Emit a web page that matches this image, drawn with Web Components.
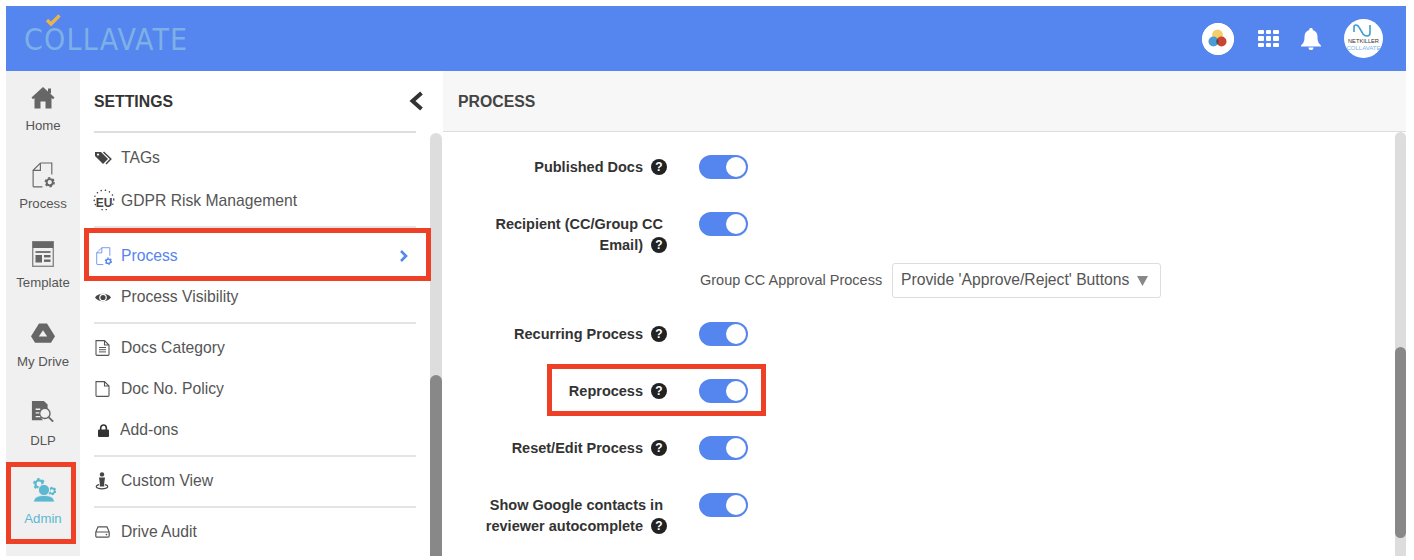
<!DOCTYPE html>
<html>
<head>
<meta charset="utf-8">
<title>Collavate Settings</title>
<style>
  html, body { margin: 0; padding: 0; height: 560px; overflow: hidden; background: #fff; }
  body { font-family: "Liberation Sans", Arial, sans-serif; }
</style>
</head>
<body>
<app-shell>
  <top-bar slot="top"></top-bar>

  <rail-item slot="rail" icon="home">Home</rail-item>
  <rail-item slot="rail" icon="process">Process</rail-item>
  <rail-item slot="rail" icon="template">Template</rail-item>
  <rail-item slot="rail" icon="drive">My Drive</rail-item>
  <rail-item slot="rail" icon="dlp">DLP</rail-item>
  <rail-item slot="rail" icon="admin" active>Admin</rail-item>

  <settings-panel slot="panel">
    <nav-group style="padding-top:3px;padding-bottom:5px">
      <nav-item icon="tags" tall>TAGs</nav-item>
      <nav-item icon="eu">GDPR Risk Management</nav-item>
    </nav-group>
    <nav-group style="padding-top:7.5px">
      <nav-item icon="process" active>Process</nav-item>
      <nav-item icon="eye">Process Visibility</nav-item>
    </nav-group>
    <nav-group>
      <nav-item icon="doclines">Docs Category</nav-item>
      <nav-item icon="doc">Doc No. Policy</nav-item>
      <nav-item icon="lock" tight>Add-ons</nav-item>
    </nav-group>
    <nav-group>
      <nav-item icon="person">Custom View</nav-item>
    </nav-group>
    <nav-group>
      <nav-item icon="hdd">Drive Audit</nav-item>
    </nav-group>
  </settings-panel>

  <process-panel slot="main">
    <process-row>Published Docs</process-row>
    <process-row sub><cc-select slot="sub"></cc-select><span style="padding-right:4px">Recipient (CC/Group CC</span><br>Email)</process-row>
    <process-row>Recurring Process</process-row>
    <process-row>Reprocess</process-row>
    <process-row>Reset/Edit Process</process-row>
    <process-row><span style="padding-right:4px">Show Google contacts in</span><br>reviewer autocomplete</process-row>
  </process-panel>

  <red-box slot="marks" style="left:6px;top:462px;width:70px;height:82px"></red-box>
  <red-box slot="marks" style="left:84px;top:228px;width:347px;height:53px"></red-box>
  <red-box slot="marks" style="left:547px;top:364px;width:219px;height:52px"></red-box>
</app-shell>

<script>
const gear = (x, y, r, c) => `
  <circle cx="${x}" cy="${y}" r="${r}" fill="none" stroke="${c}" stroke-width="${r * 0.62}"/>
  <circle cx="${x}" cy="${y}" r="${r * 1.42}" fill="none" stroke="${c}" stroke-width="${r * 0.5}" stroke-dasharray="${r * 0.72} ${r * 0.77}"/>`;

const docGear = c => `
  <path d="M9 1 H20 V12" fill="none" stroke="${c}" stroke-width="1.1"/>
  <path d="M9 1 L2 8 V23 a1 1 0 0 0 1 1 H11 M9 1 V8 H2" fill="none" stroke="${c}" stroke-width="1.1"/>
  ${gear(18, 19.5, 3, c)}`;

const ICONS = {
  home: `<svg style="margin-top:3px" width="24" height="24" viewBox="0 0 24 24"><path fill="#666" d="M12 1 L23.5 11.5 L22 13.2 L20.5 12 V22.5 H14.5 V15.5 H9.5 V22.5 H3.5 V12 L2 13.2 L.5 11.5 Z"/><rect x="17" y="2.5" width="3" height="5" fill="#666"/></svg>`,
  process: `<svg width="25" height="27" viewBox="0 0 24 26">${docGear('#666')}</svg>`,
  processBlue: `<svg width="18" height="19" viewBox="0 0 24 26">${docGear('#5585ee')}</svg>`,
  template: `<svg width="22" height="26" viewBox="0 0 22 26"><rect x=".7" y=".7" width="20.6" height="24.6" fill="none" stroke="#888" stroke-width="1.4"/><rect x=".7" y=".7" width="20.6" height="6.3" fill="#666"/><rect x="3.5" y="10" width="15" height="2" fill="#777"/><rect x="3.5" y="14" width="6.5" height="7.5" fill="#666"/><rect x="12" y="14" width="6.5" height="2.4" fill="#666"/><rect x="12" y="18.5" width="6.5" height="2.4" fill="#666"/></svg>`,
  drive: `<svg width="24" height="22" viewBox="0 0 24 24" preserveAspectRatio="none"><path fill="#666" d="M8 1.5 H16 L24 15.5 L20 22.5 H4 L0 15.5 Z"/><path fill="#f0f0f0" d="M12 9 L16.2 15.8 H7.8 Z"/></svg>`,
  dlp: `<svg width="24" height="24" viewBox="0 0 24 26"><path fill="#666" d="M0 1 H13 L17 5 V10 A7 7 0 0 0 12 22 H0 Z"/><circle cx="14" cy="14.5" r="5.6" fill="#f0f0f0" stroke="#666" stroke-width="1.5"/><path d="M18 18.5 L23 23.5" stroke="#666" stroke-width="2"/><path d="M4 10h5M4 14h4M4 18h5" stroke="#f0f0f0" stroke-width="1.4"/></svg>`,
  admin: `<svg width="25" height="26" viewBox="0 0 25 26">${gear(8, 7, 3.6, '#5bb8d0')}${gear(21, 14, 2.6, '#5bb8d0')}<circle cx="13" cy="13" r="5.6" fill="#5bb8d0" stroke="#f0f0f0" stroke-width="1"/><path fill="#5bb8d0" stroke="#f0f0f0" stroke-width=".8" d="M2.5 25 C3 20 7 18.5 13 18.5 C19 18.5 23 20 23.5 25 Z"/></svg>`,
  tags: `<svg width="18" height="14" viewBox="0 0 18 14"><path fill="#444" d="M0 1 H6 L13 8 L8 13 L0 5 Z"/><path fill="none" stroke="#444" stroke-width="1.5" d="M8.5 1 L15.8 8 L11 13"/><circle cx="3" cy="3.6" r="1.1" fill="#fff"/></svg>`,
  eu: `<svg width="24" height="24" viewBox="0 0 24 24"><circle cx="12" cy="11" r="9.8" fill="none" stroke="#444" stroke-width="1.5" stroke-linecap="round" stroke-dasharray="0.1 4.2"/><rect x="4" y="9" width="16" height="11" fill="#fff"/><text x="12" y="18" font-family="Liberation Sans, sans-serif" font-size="12" font-weight="700" fill="#444" text-anchor="middle">EU</text></svg>`,
  eye: `<svg width="16" height="11" viewBox="0 0 16 11"><path fill="#444" d="M0 5.5 C3 .6 13 .6 16 5.5 C13 10.4 3 10.4 0 5.5 Z"/><circle cx="8" cy="5.5" r="3.8" fill="#fff"/><circle cx="8" cy="5.5" r="2.6" fill="#444"/></svg>`,
  doclines: `<svg width="15" height="16" viewBox="0 0 15 16"><path fill="none" stroke="#555" stroke-width="1.1" d="M1 .6 H9.5 L14 5 V14.5 a.9 .9 0 0 1 -.9 .9 H1.9 a.9 .9 0 0 1 -.9 -.9 Z M9.5 .6 V5 H14"/><path stroke="#555" d="M4 7.5h7M4 9.7h7M4 11.9h7"/></svg>`,
  doc: `<svg width="15" height="16" viewBox="0 0 15 16"><path fill="none" stroke="#555" stroke-width="1.1" d="M1 .6 H9.5 L14 5 V14.5 a.9 .9 0 0 1 -.9 .9 H1.9 a.9 .9 0 0 1 -.9 -.9 Z M9.5 .6 V5 H14"/></svg>`,
  lock: `<svg width="11" height="13" viewBox="0 0 11 13"><path fill="none" stroke="#333" stroke-width="1.6" d="M2.7 6 V3.8 a2.8 2.8 0 0 1 5.6 0 V6"/><rect x="0" y="5.5" width="11" height="7.5" rx="1" fill="#333"/></svg>`,
  person: `<svg width="14" height="18" viewBox="0 0 14 18"><circle cx="7" cy="2.4" r="2.2" fill="#444"/><path fill="#444" d="M4 5.5 H10 L9.2 11.5 V14.5 H4.8 V11.5 Z"/><path fill="none" stroke="#444" stroke-width="1.2" d="M4 12.6 C-.5 13.6 .5 16.8 7 16.8 C13.5 16.8 14.5 13.6 10 12.6"/></svg>`,
  hdd: `<svg width="15" height="12" viewBox="0 0 15 12"><path fill="none" stroke="#555" stroke-width="1.2" d="M3 .8 H12 L14.2 6 V10 a1.2 1.2 0 0 1 -1.2 1.2 H2 a1.2 1.2 0 0 1 -1.2 -1.2 V6 Z M.8 6 H14.2"/><circle cx="11.5" cy="8.6" r=".8" fill="#555"/></svg>`
};

class AppShell extends HTMLElement {
  connectedCallback() {
    this.attachShadow({ mode: 'open' });
    this.shadowRoot.innerHTML = `
      <style>
        :host { display: block; position: relative; width: 1400px; height: 550px; margin: 6px 0 0 6px; overflow: visible; }
        .body { display: flex; height: 485px; overflow: hidden; }
        .rail { flex: 0 0 74px; background: #f0f0f0; display: flex; flex-direction: column; }
        .marks { position: absolute; left: -6px; top: -6px; }
      </style>
      <slot name="top"></slot>
      <div class="body">
        <div class="rail"><slot name="rail"></slot></div>
        <slot name="panel"></slot>
        <slot name="main"></slot>
      </div>
      <div class="marks"><slot name="marks"></slot></div>
    `;
  }
}

class TopBar extends HTMLElement {
  connectedCallback() {
    this.attachShadow({ mode: 'open' });
    this.shadowRoot.innerHTML = `
      <style>
        :host { display: flex; align-items: center; height: 65px; background: #5585ee; padding: 0 23px 0 18px; box-sizing: border-box; }
        .logo { position: relative; font: 400 30px/1 "DejaVu Sans", sans-serif; font-stretch: condensed; letter-spacing: 1.2px; color: #7db0e6; padding-top: 3px; }
        .logo svg { position: absolute; left: 21px; top: -9px; }
        .tools { margin-left: auto; display: flex; align-items: center; }
        .tools > * { flex: none; display: block; }
        .apps { width: 32px; height: 32px; border-radius: 50%; background: #fff; }
        .grid { margin-left: 24px; display: grid; grid-template-columns: repeat(3, 5.7px); grid-auto-rows: 4.6px; gap: 2px 2px; }
        .grid i { background: #fff; border-radius: 1px; }
        .bell { margin-left: 22px; }
        .avatar { margin-left: 23px; width: 39px; height: 39px; border-radius: 50%; background: #fff; display: flex; flex-direction: column; align-items: center; overflow: hidden; font-family: "Liberation Sans", sans-serif; }
        .avatar svg { margin-top: 5px; }
        .avatar b { font-size: 5.7px; line-height: 6px; font-weight: 400; color: #333; margin-top: 1px; }
        .avatar span { font-size: 6px; line-height: 8px; color: #7db0e6; }
      </style>
      <div class="logo">
        <svg width="16" height="14" viewBox="0 0 16 14"><path d="M2 7 L6 11 L14.5 2.5" fill="none" stroke="#e8b44c" stroke-width="3.4"/></svg>
        COLLAVATE
      </div>
      <div class="tools">
        <svg class="apps" viewBox="0 0 32 32">
          <circle cx="16" cy="16" r="16" fill="#fff"/>
          <circle cx="15.5" cy="11.8" r="5.4" fill="#f4ce6a"/>
          <circle cx="11.5" cy="18.5" r="5" fill="#4c9bd6"/>
          <circle cx="19.5" cy="18.5" r="5" fill="#c9452f"/>
          <path d="M15.5 15.5 a5 5 0 0 1 0 6 a5 5 0 0 1 0 -6" fill="#4a4a4a"/>
        </svg>
        <div class="grid"><i></i><i></i><i></i><i></i><i></i><i></i><i></i><i></i><i></i></div>
        <svg class="bell" width="20" height="22" viewBox="0 0 20 22"><path fill="#fff" d="M10 0 a1.7 1.7 0 0 1 1.7 2 C15 2.8 16.5 5.6 16.5 9 C16.5 14 18 15.5 20 17.5 V18.5 H0 V17.5 C2 15.5 3.5 14 3.5 9 C3.5 5.6 5 2.8 8.3 2 A1.7 1.7 0 0 1 10 0 Z M7.5 19.5 H12.5 A2.5 2.5 0 0 1 7.5 19.5 Z"/></svg>
        <div class="avatar">
          <svg width="24" height="13" viewBox="0 0 24 13"><path d="M2 8 V3 Q2 1 4 1 Q6 1 7.5 4 L11 10 Q12.5 12 15 12 Q18 12 18 9 V1" fill="none" stroke="#3f9fd0" stroke-width="1.6"/></svg>
          <b>NETKILLER</b>
          <span>COLLAVATE</span>
        </div>
      </div>
    `;
  }
}

class RailItem extends HTMLElement {
  connectedCallback() {
    this.attachShadow({ mode: 'open' });
    const color = this.hasAttribute('active') ? '#5bb8d0' : '#555';
    this.shadowRoot.innerHTML = `
      <style>
        :host { display: flex; flex-direction: column; align-items: center; height: 78.8px; box-sizing: border-box; padding-top: 10.5px; font-size: 13.2px; color: ${color}; }
        .ic { height: 30px; display: flex; align-items: center; justify-content: center; }
        .lb { margin-top: 6px; line-height: 16px; }
        svg { display: block; }
      </style>
      <div class="ic">${ICONS[this.getAttribute('icon')]}</div>
      <div class="lb"><slot></slot></div>
    `;
  }
}

class SettingsPanel extends HTMLElement {
  connectedCallback() {
    this.attachShadow({ mode: 'open' });
    this.shadowRoot.innerHTML = `
      <style>
        :host { flex: 0 0 363px; display: flex; flex-direction: column; background: #fff; height: 485px; overflow: hidden; }
        .head { flex: 0 0 60px; display: flex; align-items: center; justify-content: space-between; margin: 0 27px 0 14px; border-bottom: 2px solid #ddd; }
        h2 { margin: 2px 0 0; font-size: 15.8px; font-weight: 700; color: #333; }
        .head svg { margin-right: -8px; }
        .body { flex: 1; display: flex; min-height: 0; }
        .list { flex: 0 0 350px; box-sizing: border-box; padding: 0 14px; overflow: hidden; }
        .track { flex: 0 0 12px; background: #ddd; border-radius: 6px 6px 0 0; position: relative; }
        .thumb { position: absolute; left: 0; right: 0; top: 242px; bottom: 0; background: #888; border-radius: 6px 6px 0 0; }
      </style>
      <div class="head">
        <h2>SETTINGS</h2>
        <svg width="16" height="20" viewBox="0 0 16 20"><path d="M13.5 2 L4.5 10 L13.5 18" fill="none" stroke="#333" stroke-width="4"/></svg>
      </div>
      <div class="body">
        <div class="list"><slot></slot></div>
        <div class="track"><div class="thumb"></div></div>
      </div>
    `;
  }
}

class NavGroup extends HTMLElement {
  connectedCallback() {
    this.attachShadow({ mode: 'open' });
    this.shadowRoot.innerHTML = `
      <style>
        :host { display: block; padding: 3.5px 0 4.5px; border-bottom: 2px solid #e4e4e4; }
        :host(:last-child) { border-bottom: 0; }
      </style>
      <slot></slot>
    `;
  }
}

class NavItem extends HTMLElement {
  connectedCallback() {
    this.attachShadow({ mode: 'open' });
    const active = this.hasAttribute('active');
    const icon = this.getAttribute('icon');
    const left = icon === 'eu' ? -2 : icon === 'lock' ? 4 : 1;
    this.shadowRoot.innerHTML = `
      <style>
        :host { display: flex; align-items: center; height: ${this.hasAttribute('tall') ? 44 : 41}px; font-size: 15.7px; color: ${active ? '#5585ee' : '#555'}; }
        .ic { flex: 0 0 ${this.hasAttribute('tight') ? 26 : 27}px; display: flex; align-items: center; }
        .ic svg { display: block; margin-left: ${left}px; }
        .arrow { margin-left: auto; margin-right: 7px; }
      </style>
      <div class="ic">${ICONS[active ? 'processBlue' : icon]}</div>
      <slot></slot>
      ${active ? '<svg class="arrow" width="10" height="14" viewBox="0 0 10 14"><path d="M2 2 L7 7 L2 12" fill="none" stroke="#5585ee" stroke-width="2.6"/></svg>' : ''}
    `;
  }
}

class ProcessPanel extends HTMLElement {
  connectedCallback() {
    this.attachShadow({ mode: 'open' });
    this.shadowRoot.innerHTML = `
      <style>
        :host { flex: 1; display: flex; flex-direction: column; height: 485px; min-width: 0; overflow: hidden; }
        .head { flex: 0 0 60px; box-sizing: content-box; display: flex; align-items: center; padding: 0 0 0 15px; background: #f7f7f7; border-bottom: 1.5px solid #ddd; }
        h2 { margin: 1px 0 0; font-size: 15.8px; font-weight: 700; color: #444; }
        .body { flex: 1; display: flex; min-height: 0; }
        .rows { flex: 1; padding-top: 23px; overflow: hidden; }
        .track { flex: 0 0 11px; background: #ddd; border-radius: 6px 6px 0 0; position: relative; }
        .thumb { position: absolute; left: 0; right: 0; top: 215px; height: 191px; background: #888; border-radius: 6px; }
      </style>
      <div class="head"><h2>PROCESS</h2></div>
      <div class="body">
        <div class="rows"><slot></slot></div>
        <div class="track"><div class="thumb"></div></div>
      </div>
    `;
  }
}

class ProcessRow extends HTMLElement {
  connectedCallback() {
    this.attachShadow({ mode: 'open' });
    this.shadowRoot.innerHTML = `
      <style>
        :host { display: grid; grid-template-columns: 224px auto; column-gap: 32px; row-gap: 7px; justify-content: start; padding-bottom: ${this.hasAttribute('sub') ? 24 : 33}px; }
        .label { text-align: right; font-size: 14.5px; line-height: 21px; font-weight: 700; color: #333; padding-top: 2px; }
        .help { display: inline-block; vertical-align: -3px; margin-left: 8px; }
        .sub { grid-column: 2; }
      </style>
      <div class="label"><slot></slot><svg class="help" width="16" height="16" viewBox="0 0 16 16"><circle cx="8" cy="8" r="8" fill="#222"/><text x="8" y="12.2" font-family="Liberation Sans, sans-serif" font-size="12" font-weight="700" fill="#fff" text-anchor="middle">?</text></svg></div>
      <toggle-switch></toggle-switch>
      ${this.hasAttribute('sub') ? '<div class="sub"><slot name="sub"></slot></div>' : ''}
    `;
  }
}

class ToggleSwitch extends HTMLElement {
  connectedCallback() {
    this.attachShadow({ mode: 'open' });
    this.shadowRoot.innerHTML = `
      <style>
        :host { display: block; width: 49px; height: 24px; border-radius: 12px; background: #5585ee; position: relative; }
        i { position: absolute; right: 2px; top: 2px; width: 20px; height: 20px; border-radius: 50%; background: #fff; }
      </style>
      <i></i>
    `;
  }
}

class CcSelect extends HTMLElement {
  connectedCallback() {
    this.attachShadow({ mode: 'open' });
    this.shadowRoot.innerHTML = `
      <style>
        :host { display: flex; align-items: center; font-size: 14.5px; color: #555; white-space: nowrap; margin-left: 1px; }
        .lb { width: 192px; padding-bottom: 2px; }
        .box { width: 269px; height: 35px; box-sizing: border-box; display: flex; align-items: center; padding: 0 12px 2px 8px; border: 1px solid #ddd; border-radius: 3px; font-size: 15.7px; }
        svg { margin-left: auto; margin-top: 2px; }
      </style>
      <div class="lb">Group CC Approval Process</div>
      <div class="box">Provide 'Approve/Reject' Buttons
        <svg width="11" height="10" viewBox="0 0 11 10"><path d="M0 0 H11 L5.5 10 Z" fill="#888"/></svg>
      </div>
    `;
  }
}

class RedBox extends HTMLElement {
  connectedCallback() {
    this.attachShadow({ mode: 'open' });
    this.shadowRoot.innerHTML = `
      <style>
        :host { display: block; position: absolute; box-sizing: border-box; border: 5px solid #ee4027; pointer-events: none; }
      </style>
    `;
  }
}

customElements.define('app-shell', AppShell);
customElements.define('top-bar', TopBar);
customElements.define('rail-item', RailItem);
customElements.define('settings-panel', SettingsPanel);
customElements.define('nav-group', NavGroup);
customElements.define('nav-item', NavItem);
customElements.define('process-panel', ProcessPanel);
customElements.define('process-row', ProcessRow);
customElements.define('toggle-switch', ToggleSwitch);
customElements.define('cc-select', CcSelect);
customElements.define('red-box', RedBox);
</script>
</body>
</html>
